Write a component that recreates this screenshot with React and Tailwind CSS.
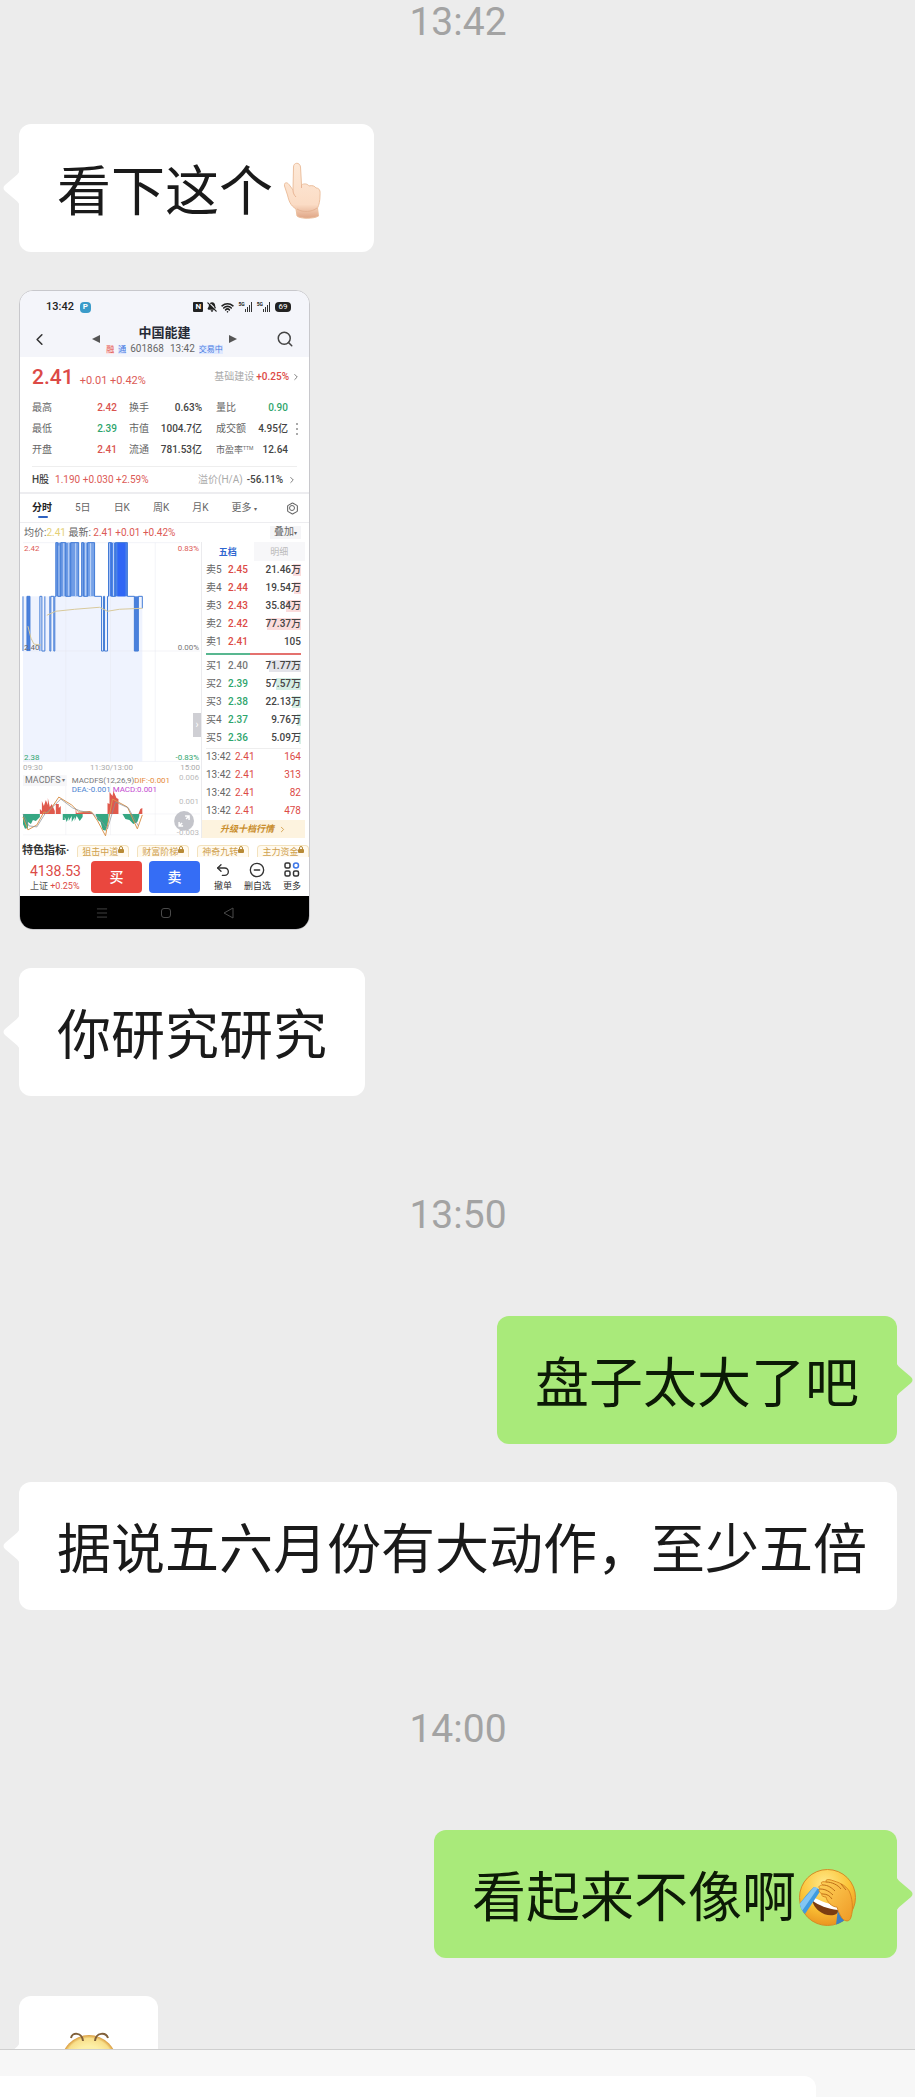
import { Search, ChevronLeft, ChevronRight, Wifi, BellOff, Hexagon, Menu, Undo2, CircleMinus } from "lucide-react"

const quoteRows = [
  ["最高", "2.42", "text-[#d9534f]", "换手", "0.63%", "量比", "0.90", "text-[#2fa56d]"],
  ["最低", "2.39", "text-[#2fa56d]", "市值", "1004.7亿", "成交额", "4.95亿", "text-[#444]"],
  ["开盘", "2.41", "text-[#d9534f]", "流通", "781.53亿", "市盈率", "12.64", "text-[#444]"]
]

const RED = "text-[#dc4a46]"
const GREEN = "text-[#2fa56d]"

const asks = [
  ["卖5", "2.45", RED, "21.46万", 8, "bg-[#fbdcdc]"],
  ["卖4", "2.44", RED, "19.54万", 7, "bg-[#fbdcdc]"],
  ["卖3", "2.43", RED, "35.84万", 15, "bg-[#fbdcdc]"],
  ["卖2", "2.42", RED, "77.37万", 34, "bg-[#fbdcdc]"],
  ["卖1", "2.41", RED, "105", 0, "bg-[#fbdcdc]"]
]

const bids = [
  ["买1", "2.40", "text-[#777]", "71.77万", 32, "bg-[#e4e4ea]"],
  ["买2", "2.39", GREEN, "57.57万", 25, "bg-[#d5eee4]"],
  ["买3", "2.38", GREEN, "22.13万", 9, "bg-[#d5eee4]"],
  ["买4", "2.37", GREEN, "9.76万", 4, "bg-[#d5eee4]"],
  ["买5", "2.36", GREEN, "5.09万", 2, "bg-[#d5eee4]"]
]

const ticks = ["164", "313", "82", "478"]

export default function App() {
  return (
    <div className="flex h-screen flex-col overflow-hidden bg-[#ececec] font-['Noto_Sans_CJK_SC',sans-serif] text-[#1a1a1a]">
      <main className="flex min-h-0 flex-1 flex-col overflow-hidden pt-0.5 pl-[19px] pr-[18px]">
        <Time className="mb-[82px]">13:42</Time>
        <div className="flex shrink-0 flex-col gap-[38px]">
          <Bubble>看下这个<PointUp /></Bubble>
          <StockShot />
          <Bubble>你研究研究</Bubble>
        </div>
        <Time className="mb-[81px] mt-[99px]">13:50</Time>
        <div className="flex shrink-0 flex-col gap-[38px]">
          <Bubble mine>盘子太大了吧</Bubble>
          <Bubble>据说五六月份有大动作，至少五倍</Bubble>
        </div>
        <Time className="mb-[81px] mt-[99px]">14:00</Time>
        <div className="flex shrink-0 flex-col gap-[38px]">
          <Bubble mine>看起来不像啊<FacePalm /></Bubble>
          <Bubble><Worm /></Bubble>
        </div>
      </main>
      <footer className="flex h-12 shrink-0 overflow-hidden border-t border-[#cfcfcf] bg-[#f7f7f7] pt-[26px]">
        <input aria-label="输入消息" className="mr-[99px] h-24 flex-1 rounded-tr-xl bg-white outline-none" />
      </footer>
    </div>
  )
}

function Time({ children, className }) {
  return (
    <time className={`block h-10 shrink-0 text-center font-[Roboto,sans-serif] text-[39px] leading-10 text-[#a3a3a3] ${className}`}>
      {children}
    </time>
  )
}

function Bubble({ children, mine }) {
  return (
    <div className={`flex ${mine ? "justify-end" : "justify-start"}`}>
      <div className={`relative flex h-32 min-w-0 items-center whitespace-nowrap rounded-xl px-[38px] text-[54px] leading-[60px] ${mine ? "bg-[#a9ea7a] text-[#0c1a06]" : "bg-white"}`}>
        {children}
        <svg
          viewBox="0 0 17 40"
          className={`absolute top-11 h-10 w-[17px] ${mine ? "left-full -ml-px -scale-x-100 fill-[#a9ea7a]" : "right-full -mr-px fill-white"}`}
        >
          <path d="M17 0C17 4 15 6 12 8.500L2 17Q-1 20 2 23L12 31.500C15 34 17 36 17 40Z" />
        </svg>
      </div>
    </div>
  )
}

function PointUp() {
  return (
    <svg viewBox="0 0 63 63" className="size-[63px] shrink-0">
      <defs>
        <linearGradient id="skin" x1="0" y1="0" x2="0" y2="1">
          <stop offset="0" stopColor="#fde9d8" />
          <stop offset=".75" stopColor="#fbdcc5" />
          <stop offset="1" stopColor="#dfa585" />
        </linearGradient>
      </defs>
      <path
        d="M20.500 10C20.500 5 27 5 27.500 10L28.500 28C31 26 35 27 36 29C39 28 42 29 43 31C46.500 31 47.500 34 47 38C47 44 46 48 44.500 51L45.500 59C41 62 27 62 24 59L23 52C17 48 16 44 14.500 38L11.500 29C11 25 14 25 16 27.500L20 33Z"
        fill="url(#skin)"
        stroke="#ecc09f"
        strokeWidth="1"
      />
      <path d="M28.500 28V31M20 33C20 36 21 38 23 40" fill="none" stroke="#e9b595" strokeWidth="1" />
      <path d="M24 52C30 56 39 55 44 51" fill="none" stroke="#e5b394" strokeWidth="1" />
    </svg>
  )
}

function FacePalm() {
  return (
    <svg viewBox="0 0 63 63" className="size-[63px] shrink-0">
      <defs>
        <radialGradient id="face" cx=".45" cy=".25" r=".8">
          <stop offset="0" stopColor="#ffe98a" />
          <stop offset=".55" stopColor="#fbc437" />
          <stop offset="1" stopColor="#e88d1c" />
        </radialGradient>
        <linearGradient id="palm" x1="0" y1="0" x2="1" y2="1">
          <stop offset="0" stopColor="#ffd35a" />
          <stop offset="1" stopColor="#ef9a26" />
        </linearGradient>
        <clipPath id="faceClip"><circle cx="31.500" cy="34.500" r="28.500" /></clipPath>
      </defs>
      <circle cx="31.500" cy="34.500" r="28" fill="url(#face)" stroke="#d68b25" strokeWidth="1" />
      <g clipPath="url(#faceClip)">
        <path d="M16 35C22 40 32 44 43 46C43 54 30 54 23 48C18 44 16 39 16 35Z" fill="#7a3c12" />
        <path d="M17 34C24 38 34 41 43 44L42 47C32 46 22 42 17 38Z" fill="#fff" />
        <path d="M18 24L25 27L9 51L1 44C7 37 12 29 18 24Z" fill="#3f9be0" />
        <path d="M18 24L22 25L6 48L1 44Z" fill="#83c5f1" />
        <path d="M42 46L49 53L46 64L40 62Z" fill="#3a82c4" />
      </g>
      <path
        d="M24 26C22 24 23 22 27 22C24 20 25 18 30 19C29 16 33 16 38 18C45 20 52 24 54 30C57 38 57 48 55 54C54 59 49 59 46 55C43 51 42 47 41 44C36 44 31 39 30 34C26 34 24 31 27 31C23 30 22 27 24 26Z"
        fill="url(#palm)"
        stroke="#d98821"
        strokeWidth="1"
      />
      <path d="M27 22C32 22 36 25 39 28M24 26C30 26 34 29 37 32M27 31C31 31 34 33 36 36M30 19C36 19 42 22 45 26M45 21L50 27" fill="none" stroke="#bd6f18" strokeWidth="1" />
    </svg>
  )
}

function Worm() {
  return (
    <svg viewBox="0 0 63 63" className="size-[63px] shrink-0">
      <defs>
        <radialGradient id="worm">
          <stop offset=".6" stopColor="#fdf0a8" />
          <stop offset=".88" stopColor="#f8df8a" />
          <stop offset="1" stopColor="#d99a3d" />
        </radialGradient>
      </defs>
      <circle cx="32" cy="34" r="28" fill="url(#worm)" />
      <path d="M14 9C15 3 25 3 26 12M51 9C49 3 39 3 38 12" fill="none" stroke="#80603a" strokeWidth="2" />
    </svg>
  )
}

// shared screenshot of the stock page, sent as a picture message
function StockShot() {
  return (
    <article className="flex h-[640px] w-[291px] flex-col overflow-hidden rounded-[14px] border border-[#c8c8cc] bg-white font-[Roboto,'Noto_Sans_CJK_SC',sans-serif] text-[10px] leading-3 text-[#666]">
      <header className="flex h-[66px] shrink-0 flex-col bg-[#f4f5fa]">
        <div className="flex h-8 items-center pl-[26px] pr-[18px] text-[#222]">
          <span className="text-[11px] font-medium">13:42</span>
          <span className="ml-1.5 flex size-[11px] items-center justify-center rounded-sm bg-[#3a9bc9] text-[8px] font-bold text-white">P</span>
          <div className="ml-auto flex items-center gap-1">
            <span className="flex h-[10px] w-[10px] items-center justify-center rounded-[1px] bg-[#222] text-[8px] font-bold text-white">N</span>
            <BellOff size={10} strokeWidth={3} fill="#222" />
            <Wifi size={13} strokeWidth={3} />
            <Signal label="5G" />
            <Signal label="5G" />
            <span className="flex h-[10px] w-4 items-center justify-center rounded-[4px] bg-[#222] text-[8px] text-white">69</span>
          </div>
        </div>
        <div className="flex items-center justify-between pl-2.5 pr-[15px]">
          <ChevronLeft size={19} strokeWidth={2} className="text-[#333]" />
          <svg viewBox="0 0 8 8" className="ml-9 size-2 fill-[#555]"><path d="M8 0V8L0 4Z" /></svg>
          <div className="flex flex-col items-center">
            <h2 className="text-[13px] leading-[20px] font-bold text-[#272a35]">中国能建</h2>
            <div className="flex items-center gap-1 text-[10px] leading-3">
              <span className="bg-[#fde3e3] text-[8px] leading-[9px] text-[#e0605c]">融</span>
              <span className="bg-[#dfe9ff] text-[8px] leading-[9px] text-[#4a7be0]">通</span>
              <span>601868</span>
              <span className="ml-0.5">13:42</span>
              <span className="bg-[#dfe9ff] text-[8px] leading-[9px] text-[#4a7be0]">交易中</span>
            </div>
          </div>
          <svg viewBox="0 0 8 8" className="mr-8 size-2 fill-[#555]"><path d="M0 0V8L8 4Z" /></svg>
          <Search size={18} strokeWidth={2} className="text-[#444]" />
        </div>
      </header>

      <div className="flex h-10 shrink-0 items-center pl-3 pr-2">
        <strong className="text-[21px] font-medium text-[#dc4a46]">2.41</strong>
        <span className="ml-1.5 pt-2 text-[11px] text-[#dc5a56]">+0.01 +0.42%</span>
        <span className="ml-auto text-[#aaa]">基础建设</span>
        <span className="ml-0.5 font-medium text-[#dc4a46]">+0.25%</span>
        <ChevronRight size={10} className="ml-0.5" />
      </div>

      <div className="flex shrink-0 items-center">
        <table className="ml-3 w-[256px] table-fixed">
          <colgroup>
            <col className="w-8" /><col className="w-[53px]" /><col className="w-[34px]" /><col className="w-[51px]" /><col className="w-12" /><col />
          </colgroup>
          <tbody>
            {quoteRows.map(([a, av, aColor, b, bv, c, cv, cColor]) => (
              <tr key={a} className="h-[21px]">
                <th className="text-left font-normal">{a}</th>
                <td className={`text-right font-medium ${aColor}`}>{av}</td>
                <th className="pl-3 text-left font-normal whitespace-nowrap">{b}</th>
                <td className="text-right font-medium text-[#444] whitespace-nowrap">{bv}</td>
                <th className="pl-3.5 text-left font-normal whitespace-nowrap">
                  {c === "市盈率" ? <span className="text-[9px]">{c}<sup className="text-[5px]">TTM</sup></span> : c}
                </th>
                <td className={`text-right font-medium whitespace-nowrap ${cColor}`}>{cv}</td>
              </tr>
            ))}
          </tbody>
        </table>
        <svg viewBox="0 0 2 12" className="ml-2 h-3 w-0.5 fill-[#aaa]"><path d="M0 0H2V2H0ZM0 5H2V7H0ZM0 10H2V12H0Z" /></svg>
      </div>

      <div className="mx-3 mt-1.5 flex h-[26px] shrink-0 items-center border-t border-[#eee]">
        <span className="font-medium text-[#444]">H股</span>
        <span className="ml-1.5 text-[#dc5a56]">1.190 +0.030 +2.59%</span>
        <span className="ml-auto text-[#aaa]">溢价(H/A)</span>
        <span className="ml-1 font-medium text-[#444]">-56.11%</span>
        <ChevronRight size={10} className="ml-1" />
      </div>

      <nav className="flex h-[31px] shrink-0 items-center justify-between border-y border-t-2 border-[#ededf0] pl-3 pr-2.5">
        <button className="relative text-[10px] font-bold text-[#222]">
          分时
          <span className="absolute -bottom-1 left-1.5 h-0.5 w-2.5 rounded bg-[#2f62c0]" />
        </button>
        <button>5日</button>
        <button>日K</button>
        <button>周K</button>
        <button>月K</button>
        <button>更多 <span className="text-[6px]">▾</span></button>
        <span className="ml-1.5 flex items-center justify-center">
          <Hexagon size={13} />
          <span className="absolute size-1.5 rounded-full border border-[#666]" />
        </span>
      </nav>

      <div className="flex h-[19px] shrink-0 items-center pl-1 pr-2">
        <span>均价:<span className="text-[#e5d074]">2.41</span> 最新: <span className="text-[#dc5a56]">2.41 +0.01 +0.42%</span></span>
        <button className="ml-auto bg-[#f5f5f7] px-1">叠加<span className="text-[6px]">▾</span></button>
      </div>

      <div className="flex h-[296px] shrink-0">
        <div className="relative w-[182px] shrink-0 border-r border-[#ebebee]">
          <PriceChart />
          <MacdChart />
          <span className="absolute top-[171px] right-0 flex h-6 w-2 items-center justify-center bg-[#cfcfd4] text-white">›</span>
        </div>
        <div className="flex flex-1 flex-col pr-1">
          <div className="flex h-[19px] shrink-0">
            <button className="flex-1 text-[9px] font-bold text-[#2f66d0]">五档</button>
            <button className="flex-1 bg-[#f7f7f9] text-[9px] text-[#bbb]">明细</button>
          </div>
          <div className="flex flex-1 flex-col pl-1">
            <Depth rows={asks} />
            <div className="my-0.5 mr-1 flex h-0.5">
              <span className="w-11 bg-[#58b790]" />
              <span className="flex-1 bg-[#e4716e]" />
            </div>
            <Depth rows={bids} />
            <table className="mr-1 border-t border-[#eee]">
              <tbody>
                {ticks.map(volume => (
                  <tr key={volume} className="h-[18px]">
                    <td className="w-[29px]">13:42</td>
                    <td className="text-[#dc4a46]">2.41</td>
                    <td className="text-right text-[#dc4a46]">{volume}</td>
                  </tr>
                ))}
              </tbody>
            </table>
          </div>
          <button className="flex h-[18px] shrink-0 items-center justify-center gap-1 bg-[#fdf3df] text-[9px] font-bold text-[#c98d2c] italic">
            升级十档行情 <ChevronRight size={9} />
          </button>
        </div>
      </div>

      <div className="flex h-[19px] shrink-0 items-end gap-2 overflow-hidden pl-0.5 whitespace-nowrap">
        <span className="text-[11px] font-bold text-[#333]">特色指标·</span>
        {["狙击中道", "财富阶梯", "神奇九转", "主力资金"].map(name => (
          <span key={name} className="flex h-3 shrink-0 items-center rounded-t border-x border-t border-[#f3e2bd] bg-[#fffaf0] px-1 text-[9px] text-[#cfa14e]">
            {name}<Lock />
          </span>
        ))}
      </div>

      <div className="flex h-[39px] shrink-0 items-center pl-2.5 pr-2">
        <div className="w-[61px] whitespace-nowrap text-[#dc4a46]">
          <div className="text-[14px] leading-[18px]">4138.53</div>
          <div className="text-[9px]"><span className="text-[#555]">上证</span> +0.25%</div>
        </div>
        <button className="h-8 w-[51px] rounded-sm bg-[#ea473e] text-[14px] font-medium text-white">买</button>
        <button className="ml-[7px] h-8 w-[51px] rounded-sm bg-[#356df5] text-[14px] font-medium text-white">卖</button>
        <div className="flex flex-1 justify-between pl-3.5 text-[9px] text-[#333]">
          <button className="flex flex-col items-center gap-0.5"><Undo2 size={16} />撤单</button>
          <button className="flex flex-col items-center gap-0.5"><CircleMinus size={16} />删自选</button>
          <button className="flex flex-col items-center gap-0.5">
            <svg viewBox="0 0 16 16" className="size-4 fill-none stroke-[#333] stroke-[1.5]">
              <rect x="1" y="1" width="5" height="5" rx="1.500" />
              <circle cx="12" cy="3.500" r="2.500" className="stroke-[#3f78e8]" />
              <rect x="1" y="9" width="5" height="5" rx="1.500" />
              <rect x="9.500" y="9" width="5" height="5" rx="1.500" />
            </svg>
            更多
          </button>
        </div>
      </div>

      <div className="flex flex-1 items-center justify-center gap-[52px] bg-black text-[#4a4a4a]">
        <Menu size={14} strokeWidth={1.5} />
        <span className="size-[10px] rounded-[3px] border border-[#4a4a4a]" />
        <svg viewBox="0 0 12 12" className="size-3 fill-none stroke-[#4a4a4a]"><path d="M10 1V11L1 6Z" /></svg>
      </div>
    </article>
  )
}

function Depth({ rows }) {
  return (
    <div className="flex flex-1 flex-col">
      {rows.map(([name, value, color, volume, width, bar]) => (
        <div key={name} className="mr-1 flex flex-1 items-center">
          <span className="w-[22px]">{name}</span>
          <span className={`font-medium ${color}`}>{value}</span>
          <span className="relative ml-auto font-medium text-[#444]">
            <span className={`absolute inset-y-0 right-0 ${bar}`} style={{ width }} />
            <span className="relative">{volume}</span>
          </span>
        </div>
      ))}
    </div>
  )
}

function Signal({ label }) {
  return (
    <span className="flex items-end">
      <span className="self-start text-[5px] leading-[5px] font-bold">{label}</span>
      <svg viewBox="0 0 8 10" className="h-[10px] w-2 fill-[#333]">
        <path d="M0 7H1V10H0ZM2 5H3V10H2ZM4 3H5V10H4ZM6 0H7V10H6Z" />
      </svg>
    </span>
  )
}

function Lock() {
  return (
    <svg viewBox="0 0 6 7" className="mb-1 h-[7px] w-1.5">
      <rect y="3" width="6" height="4" rx="1" fill="#b88a35" />
      <path d="M1.500 3V2A1.500 1.500 0 0 1 4.500 2V3" fill="none" stroke="#b88a35" />
    </svg>
  )
}

function PriceChart() {
  return (
    <svg viewBox="0 0 182 232" className="block h-[232px] w-full" fontSize="8">
      <rect x="3" y="54" width="120" height="166" fill="#eff3fe" />
      <path d="M46 0V220M91 0V220M136 0V220M3 109H181M3 220H181M3 0H181" stroke="#e6e9f1" strokeWidth=".5" />
      <rect x="36" y="0" width="23" height="54" fill="#6f9ce6" />
      <rect x="62" y="0" width="13" height="54" fill="#78a3e8" />
      <rect x="90" y="0" width="18" height="54" fill="#4a80ea" />
      <rect x="98" y="0" width="8" height="54" fill="#2f66f5" />
      <rect x="115" y="54" width="4" height="55" fill="#4a80dd" />
      <rect x="7" y="54" width="3" height="55" fill="#4a80dd" />
      <path d="M39 3V54M44 0V54M49 0V54M56 0V54M66 0V54M71 0V54M94 0V54" stroke="#c3d7f7" />
      <path
        d="M3 54V109M7 109V54H10V109M20 109V54H22V109H25V54M30 54V109H31V54H34V109H35V54H36V0H38V54H41V0H46V54H51V0H59V54H62V0H64V54H68V0H75V54H82V109H84V54H85V109H88V54H89V0H92V54H96V0H108V54H115V109H119V54H123V66"
        fill="none"
        stroke="#427bd6"
        strokeWidth="1"
      />
      <path d="M8 84L11 96L14 102L21 103M27 73L36 69L55 67L80 65L88 69L100 67L123 66" fill="none" stroke="#d8c99a" />
      <text x="4" y="8" fill="#dc5a56">2.42</text>
      <text x="180" y="8" textAnchor="end" fill="#dc5a56">0.83%</text>
      <text x="4" y="108" fill="#666">2.40</text>
      <text x="180" y="108" textAnchor="end" fill="#777">0.00%</text>
      <text x="4" y="219" fill="#2fa56d">2.38</text>
      <text x="180" y="219" textAnchor="end" fill="#2fa56d">-0.83%</text>
      <g fill="#aaa">
        <text x="3" y="229">09:30</text>
        <text x="92" y="229" textAnchor="middle">11:30/13:00</text>
        <text x="181" y="229" textAnchor="end">15:00</text>
      </g>
    </svg>
  )
}

function MacdChart() {
  return (
    <svg viewBox="0 0 182 64" className="block h-16 w-full" fontSize="8">
      <path d="M46 4V61M91 4V61M136 4V61M3 40H181M3 61H181" stroke="#ececf1" strokeWidth=".5" />
      <rect x="3" y="1" width="44" height="11" fill="#f6f6f8" />
      <text x="5" y="9" fontSize="9" fill="#777">MACDFS</text>
      <text x="42" y="8" fontSize="6" fill="#777">▾</text>
      <text x="52" y="9" fill="#777">MACDFS(12,26,9)<tspan fill="#e58a3a">DIF:-0.001</tspan></text>
      <text x="52" y="18" fill="#4a7fd0">DEA:-0.001<tspan fill="#c34ad0" dx="2">MACD:0.001</tspan></text>
      <g fill="#bbb" textAnchor="end">
        <text x="180" y="6">0.006</text>
        <text x="180" y="30">0.001</text>
        <text x="180" y="61">-0.003</text>
      </g>
      <path d="M3 40V50L5 55L8 54V48L11 50L13 46L16 47L20 43V40ZM43 40V46H45V43L47 48L49 43V47L52 42V48L55 43V47L57 42L60 47L63 43V40ZM76 40L78 46L81 48L83 56L86 57L89 47V40ZM103 40L106 45L110 46L114 50L118 48L120 42V40Z" fill="#36a783" />
      <path d="M20 40V35L22 37V27L24 32L26 26L28 31V24L30 33L32 30L35 37V40ZM36 40V30H39V34L41 32V40ZM56 40V34L57 39L64 38L70 37L74 40ZM88 40V29L90 30V18L93 22L94 17L97 24L99 25V40ZM119 40L121 35L123 34V40Z" fill="#e0594c" />
      <path d="M3 43L8 56L17 51L24 38L28 39L33 32L39 23L52 31L59 38L72 38L78 47L86 62L93 25L108 33L118 55L123 41" fill="none" stroke="#d99450" />
      <path d="M3 40L9 52L17 53L25 40L35 31L41 25L53 34L61 37L72 39L80 45L88 55L96 28L109 34L119 52" fill="none" stroke="#8a8f94" strokeWidth=".7" />
      <circle cx="165" cy="47" r="10" fill="#b9bac1" fillOpacity=".85" />
      <path d="M160 52L163 49M167 45L170 42M160 48V52H164M166 42H170V46" fill="none" stroke="#fff" strokeWidth="1.500" />
    </svg>
  )
}
